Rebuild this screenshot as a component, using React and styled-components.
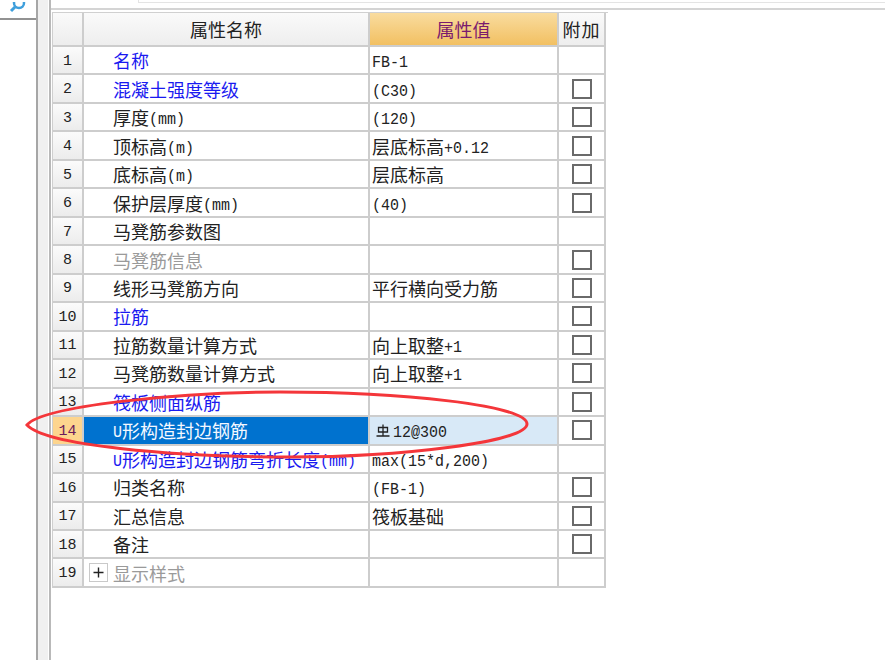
import React from 'react';
import styled, { createGlobalStyle } from 'styled-components';

const Global = createGlobalStyle`
  html, body {
    margin: 0;
    padding: 0;
    background: #fff;
  }
  body {
    font-family: "Noto Sans CJK SC", "Liberation Sans", sans-serif;
    overflow: hidden;
  }
`;

const Page = styled.div`
  position: relative;
  width: 885px;
  height: 660px;
  display: flex;
  overflow: hidden;
  background: #fff;
`;

const SidePanel = styled.div`
  width: 36px;
  flex: none;
  height: 100%;
  display: flex;
  flex-direction: column;
`;

const SearchBox = styled.div`
  height: 18px;
  border-bottom: 2px solid #929292;
  display: flex;
  justify-content: center;
  align-items: flex-end;
  overflow: hidden;
  flex: none;
`;

const Splitter = styled.div`
  width: 10px;
  flex: none;
  height: 100%;
  border-left: 2px solid #a6a6a6;
  background: #f0f0f0;
  margin-right: 1px;
`;

const Main = styled.div`
  flex: 1;
  min-width: 0;
  border-left: 2px solid #b9b9b9;
  display: flex;
  flex-direction: column;
`;

const TopStrip = styled.div`
  height: 8px;
  flex: none;
  padding-left: 87px;
  border-bottom: 2px solid #d4d4d4;
`;

const TopField = styled.div`
  height: 2px;
  border: solid #e4e4e4;
  border-width: 0 0 1px 1px;
`;

const Grid = styled.div`
  width: 555px;
  margin: 2px 0 0 1px;
  display: grid;
  grid-template-columns: 31px 286px 189px 47px;
  grid-template-rows: 34px repeat(19, 28.47px);
  border-left: 1px solid #cfcfcf;
  border-top: 1px solid #d0d0d0;
`;

const Cell = styled.div`
  box-sizing: border-box;
  border-right: 2px solid #cdcdcd;
  border-bottom: 2px solid #cdcdcd;
  display: flex;
  align-items: center;
  min-width: 0;
  white-space: nowrap;
  overflow: hidden;
`;

const HeadCorner = styled(Cell)`
  background: linear-gradient(#fafafa, #ededed);
`;

const HeadName = styled(Cell)`
  justify-content: center;
  background: linear-gradient(#fafafa, #eeeeee);
  font-size: 18px;
  color: #222;
`;

const HeadValue = styled(Cell)`
  justify-content: center;
  background: linear-gradient(#f9dc9f, #f2c062);
  font-size: 18px;
  color: #7a1a6e;
`;

const HeadExtra = styled(Cell)`
  justify-content: center;
  background: linear-gradient(#fafafa, #eeeeee);
  font-size: 18px;
  letter-spacing: 1px;
  color: #222;
`;

const RowNumber = styled(Cell)`
  justify-content: center;
  padding-top: 2px;
  font-family: "Liberation Mono", monospace;
  font-size: 15px;
  color: ${(p) => (p.$active ? '#6b1a5c' : '#222')};
  background: ${(p) =>
    p.$active ? '#fdd58e' : 'linear-gradient(#fbfbfb, #ececec)'};
`;

const nameColors = { blue: '#1a1af0', black: '#222', gray: '#9a9a9a', white: '#f4f8ff' };

const NameCell = styled(Cell)`
  padding-left: ${(p) => (p.$expander ? '5px' : '29px')};
  font-size: 18px;
  color: ${(p) => nameColors[p.$tone]};
  background: ${(p) => (p.$active ? '#0072cf' : '#fff')};
  gap: 5px;
`;

const ValueCell = styled(Cell)`
  padding-left: 2px;
  font-size: 18px;
  color: #222;
  background: ${(p) => (p.$active ? '#d8e9f7' : '#fff')};
`;

const Latin = styled.span`
  display: inline-block;
  vertical-align: 2px;
  line-height: 1;
  font-family: "Liberation Mono", monospace;
  font-size: 15px;
  transform: scaleY(1.15);
`;

const RebarMark = styled.svg`
  flex: none;
  margin: 0 3px 0 4px;
`;

const ExtraCell = styled(Cell)`
  justify-content: center;
  background: #fff;
`;

const Checkbox = styled.span`
  display: block;
  box-sizing: border-box;
  width: 20px;
  height: 20px;
  border: 2px solid #6a6a6a;
  background: #fff;
`;

const Expander = styled.span`
  box-sizing: border-box;
  width: 19px;
  height: 19px;
  border: 1px solid #c9c9c9;
  display: flex;
  align-items: center;
  justify-content: center;
  flex: none;
`;

const Ring = styled.svg`
  position: absolute;
  left: 0;
  top: 0;
  pointer-events: none;
`;

const rows = [
  { name: '名称', tone: 'blue', value: 'FB-1', check: false },
  { name: '混凝土强度等级', tone: 'blue', value: '(C30)', check: true },
  { name: '厚度(mm)', tone: 'black', value: '(120)', check: true },
  { name: '顶标高(m)', tone: 'black', value: '层底标高+0.12', check: true },
  { name: '底标高(m)', tone: 'black', value: '层底标高', check: true },
  { name: '保护层厚度(mm)', tone: 'black', value: '(40)', check: true },
  { name: '马凳筋参数图', tone: 'black', value: '', check: false },
  { name: '马凳筋信息', tone: 'gray', value: '', check: true },
  { name: '线形马凳筋方向', tone: 'black', value: '平行横向受力筋', check: true },
  { name: '拉筋', tone: 'blue', value: '', check: true },
  { name: '拉筋数量计算方式', tone: 'black', value: '向上取整+1', check: true },
  { name: '马凳筋数量计算方式', tone: 'black', value: '向上取整+1', check: true },
  { name: '筏板侧面纵筋', tone: 'blue', value: '', check: true },
  { name: 'U形构造封边钢筋', tone: 'white', value: '12@300', rebar: true, check: true, active: true },
  { name: 'U形构造封边钢筋弯折长度(mm)', tone: 'blue', value: 'max(15*d,200)', check: false },
  { name: '归类名称', tone: 'black', value: '(FB-1)', check: true },
  { name: '汇总信息', tone: 'black', value: '筏板基础', check: true },
  { name: '备注', tone: 'black', value: '', check: true },
  { name: '显示样式', tone: 'gray', value: '', check: false, expander: true },
];

const MixedText = ({ text }) => (
  <span>
    {text.split(/([\x20-\x7e]+)/).map((part, i) =>
      /^[\x20-\x7e]+$/.test(part) ? <Latin key={i}>{part}</Latin> : part
    )}
  </span>
);

const App = () => {
  return (
    <Page>
      <Global />
      <SidePanel>
        <SearchBox>
          <svg width="22" height="16" viewBox="0 0 22 16">
            <circle cx="12" cy="1" r="5" fill="none" stroke="#3f9fdc" strokeWidth="2.5" />
            <path d="M8 5 L4 9" stroke="#3f9fdc" strokeWidth="3" />
          </svg>
        </SearchBox>
      </SidePanel>
      <Splitter />
      <Main>
        <TopStrip>
          <TopField />
        </TopStrip>
        <Grid>
          <HeadCorner />
          <HeadName>属性名称</HeadName>
          <HeadValue>属性值</HeadValue>
          <HeadExtra>附加</HeadExtra>
          {rows.map((row, i) => (
            <React.Fragment key={row.name}>
              <RowNumber $active={row.active}>{i + 1}</RowNumber>
              <NameCell $tone={row.tone} $active={row.active} $expander={row.expander}>
                {row.expander && (
                  <Expander>
                    <svg width="11" height="11" viewBox="0 0 11 11">
                      <path d="M0.5 5.5H10.5M5.5 0.5V10.5" stroke="#222" strokeWidth="1.4" />
                    </svg>
                  </Expander>
                )}
                <MixedText text={row.name} />
              </NameCell>
              <ValueCell $active={row.active}>
                {row.rebar && (
                  <RebarMark width="14" height="13" viewBox="0 0 14 13">
                    <path
                      d="M2.5 3.5H11.5V8H2.5ZM7 0.5V12M0.5 12H13.5"
                      fill="none"
                      stroke="#222"
                      strokeWidth="1.3"
                    />
                  </RebarMark>
                )}
                <MixedText text={row.value} />
              </ValueCell>
              <ExtraCell>{row.check && <Checkbox />}</ExtraCell>
            </React.Fragment>
          ))}
        </Grid>
      </Main>
      <Ring width="885" height="660" viewBox="0 0 885 660">
        <path
          d="M27 425C42 406 180 392 280 392C400 392 527 405 527 424C527 442 400 457 290 457C170 457 45 445 27 425Z"
          fill="none"
          stroke="#f4363a"
          strokeWidth="3"
        />
      </Ring>
    </Page>
  );
};

export default App;
